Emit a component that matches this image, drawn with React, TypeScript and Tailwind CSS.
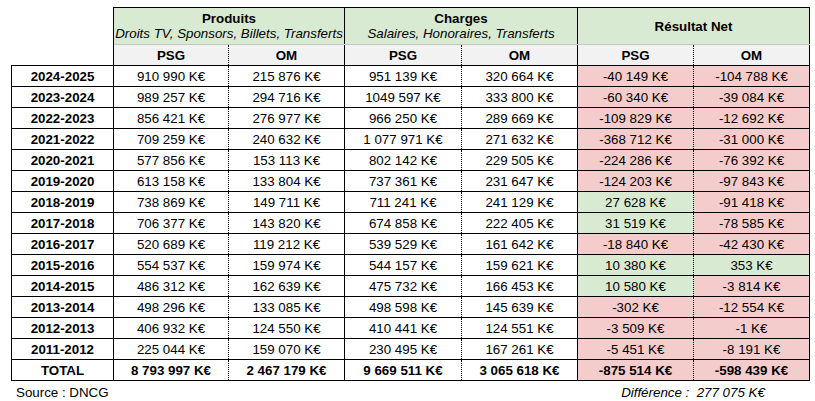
type Row = {
  year: string;
  values: string[];
};

const rows: Row[] = [
  { year: "2024-2025", values: ["910 990 K€", "215 876 K€", "951 139 K€", "320 664 K€", "-40 149 K€", "-104 788 K€"] },
  { year: "2023-2024", values: ["989 257 K€", "294 716 K€", "1049 597 K€", "333 800 K€", "-60 340 K€", "-39 084 K€"] },
  { year: "2022-2023", values: ["856 421 K€", "276 977 K€", "966 250 K€", "289 669 K€", "-109 829 K€", "-12 692 K€"] },
  { year: "2021-2022", values: ["709 259 K€", "240 632 K€", "1 077 971 K€", "271 632 K€", "-368 712 K€", "-31 000 K€"] },
  { year: "2020-2021", values: ["577 856 K€", "153 113 K€", "802 142 K€", "229 505 K€", "-224 286 K€", "-76 392 K€"] },
  { year: "2019-2020", values: ["613 158 K€", "133 804 K€", "737 361 K€", "231 647 K€", "-124 203 K€", "-97 843 K€"] },
  { year: "2018-2019", values: ["738 869 K€", "149 711 K€", "711 241 K€", "241 129 K€", "27 628 K€", "-91 418 K€"] },
  { year: "2017-2018", values: ["706 377 K€", "143 820 K€", "674 858 K€", "222 405 K€", "31 519 K€", "-78 585 K€"] },
  { year: "2016-2017", values: ["520 689 K€", "119 212 K€", "539 529 K€", "161 642 K€", "-18 840 K€", "-42 430 K€"] },
  { year: "2015-2016", values: ["554 537 K€", "159 974 K€", "544 157 K€", "159 621 K€", "10 380 K€", "353 K€"] },
  { year: "2014-2015", values: ["486 312 K€", "162 639 K€", "475 732 K€", "166 453 K€", "10 580 K€", "-3 814 K€"] },
  { year: "2013-2014", values: ["498 296 K€", "133 085 K€", "498 598 K€", "145 639 K€", "-302 K€", "-12 554 K€"] },
  { year: "2012-2013", values: ["406 932 K€", "124 550 K€", "410 441 K€", "124 551 K€", "-3 509 K€", "-1 K€"] },
  { year: "2011-2012", values: ["225 044 K€", "159 070 K€", "230 495 K€", "167 261 K€", "-5 451 K€", "-8 191 K€"] },
];

const total = ["8 793 997 K€", "2 467 179 K€", "9 669 511 K€", "3 065 618 K€", "-875 514 K€", "-598 439 K€"];

// PSG columns get a dotted separator, OM columns close the group with a solid line
const sep = (i: number) =>
  i % 2 === 0 ? "border-r border-r-black [border-right-style:dotted]" : "border-r border-r-black";

const resultBg = (v: string) => (v.startsWith("-") ? "bg-[#f4cccc]" : "bg-[#d9ead3]");

export default function App() {
  return (
    <div
      className="w-[815px] h-[401px] bg-white pl-[11px] pt-[7px] text-[13.33px] text-black"
      style={{ fontFamily: '"Liberation Sans", Arial, sans-serif' }}
    >
      <table className="table-fixed border-collapse leading-[15px]">
        <colgroup>
          <col className="w-[102px]" />
          <col className="w-[115px]" />
          <col className="w-[116px]" />
          <col className="w-[117px]" />
          <col className="w-[116px]" />
          <col className="w-[116px]" />
          <col className="w-[116px]" />
        </colgroup>
        <thead>
          <tr className="bg-[#d9ead3]">
            <th className="bg-white border-r border-black p-0" />
            <th colSpan={2} className="h-[37px] p-0 border-t border-r border-black border-b border-b-[#c6c6c6]">
              <div className="font-bold">Produits</div>
              <div className="italic font-normal">Droits TV, Sponsors, Billets, Transferts</div>
            </th>
            <th colSpan={2} className="h-[37px] p-0 border-t border-r border-black border-b border-b-[#c6c6c6]">
              <div className="font-bold">Charges</div>
              <div className="italic font-normal">Salaires, Honoraires, Transferts</div>
            </th>
            <th colSpan={2} className="h-[37px] p-0 border-t border-r border-black border-b border-b-[#c6c6c6] font-bold">
              Résultat Net
            </th>
          </tr>
          <tr className="bg-[#f2f2f2] font-bold">
            <th className="bg-white border-r border-b border-black p-0" />
            {["PSG", "OM", "PSG", "OM", "PSG", "OM"].map((t, i) => (
              <th key={i} className={`h-[21px] p-0 border-b border-b-black ${sep(i)}`}>
                {t}
              </th>
            ))}
          </tr>
        </thead>
        <tbody>
          {rows.map((r) => (
            <tr key={r.year}>
              <td className="h-[21px] p-0 text-center font-bold border-l border-r border-b border-black">{r.year}</td>
              {r.values.map((v, i) => (
                <td
                  key={i}
                  className={`h-[21px] p-0 text-center border-b border-b-black ${i >= 4 ? resultBg(v) : ""} ${sep(i)}`}
                >
                  {v}
                </td>
              ))}
            </tr>
          ))}
          <tr className="font-bold">
            <td className="h-[21px] p-0 text-center border-l border-r border-b border-black">TOTAL</td>
            {total.map((v, i) => (
              <td
                key={i}
                className={`h-[21px] p-0 text-center border-b border-b-black ${i >= 4 ? "bg-[#f4cccc]" : ""} ${sep(i)}`}
              >
                {v}
              </td>
            ))}
          </tr>
        </tbody>
      </table>
      <div className="flex w-[798px] mt-[2px]">
        <div className="w-[566px] pl-[5px]">Source : DNCG</div>
        <div className="w-[232px] text-center italic">Différence :&nbsp; 277 075 K€</div>
      </div>
    </div>
  );
}
